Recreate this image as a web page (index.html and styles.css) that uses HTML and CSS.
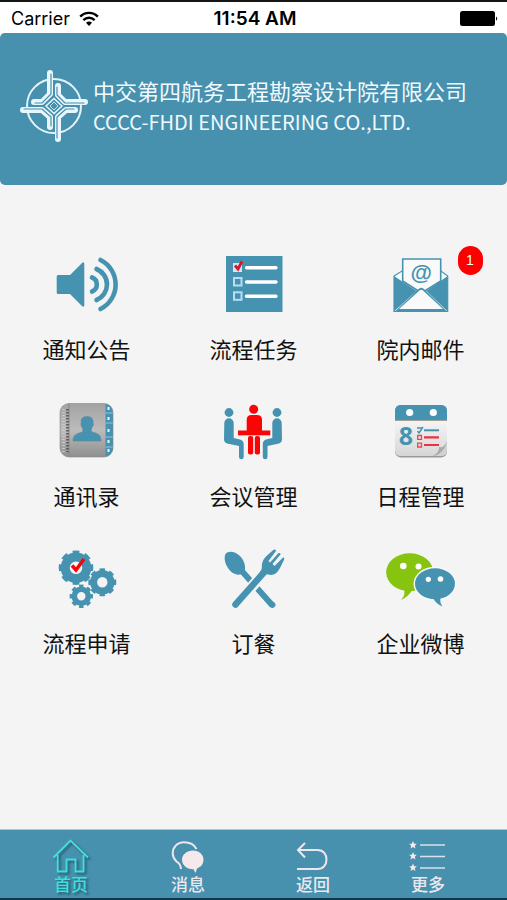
FILE: index.html
```html
<!DOCTYPE html>
<html lang="zh-CN">
<head>
  <meta charset="UTF-8">
  <meta name="viewport" content="width=device-width, initial-scale=1">
  <title>中交第四航务工程勘察设计院有限公司</title>
  <link rel="stylesheet" href="styles.css">
</head>
<body>

  <div class="status-bar">
    <div class="carrier">
      <span>Carrier</span>
      <svg class="wifi" viewBox="0 0 20 16" width="20" height="16">
        <g fill="none" stroke="#000" stroke-width="2.4">
          <path d="M1.2 5.6C6 .6 14 .6 18.8 5.6"/>
          <path d="M4.4 9.2C7.6 6 12.4 6 15.6 9.2"/>
        </g>
        <path d="M7 11.8C8.8 10.2 11.2 10.2 13 11.8L10 15Z"/>
      </svg>
    </div>
    <div class="clock">11:54 AM</div>
    <div class="battery">
      <svg viewBox="0 0 40 16" width="40" height="16">
        <rect x="1" y="0" width="35" height="15" rx="2.5"/>
        <path d="M37 5.5Q39.5 7.5 37 9.8Z"/>
      </svg>
    </div>
  </div>

  <header class="banner">
    <svg class="logo" viewBox="0 0 68 74" width="68" height="74">
      <circle cx="34" cy="37" r="27" fill="none" stroke="#e4f3fa" stroke-width="2"/>
      <g fill="none" stroke-linejoin="round" stroke-linecap="round">
        <g stroke="#e9f7fd" stroke-width="6">
          <path d="M30 4V25L22 33H14"/>
          <path d="M38 17V26L45 33H65"/>
          <path d="M3 41H22L30 48V58"/>
          <path d="M38 70V48L46 41H55"/>
        </g>
        <g stroke="#4791ae" stroke-width="1.200">
          <path d="M31 5V25L22 34H15"/>
          <path d="M37 18V26L45 34H64"/>
          <path d="M4 40H22L31 48V57"/>
          <path d="M37 69V48L46 40H54"/>
        </g>
      </g>
      <path d="M34 29.500L42 37L34 44.500L26 37Z" fill="#4791ae" stroke="#e9f7fd" stroke-width="1.500"/>
      <path d="M34 33L38 37L34 41L30 37Z" fill="none" stroke="#c5e3ef" stroke-width="1"/>
    </svg>
    <div class="company">
      <h1>中交第四航务工程勘察设计院有限公司</h1>
      <p>CCCC-FHDI ENGINEERING CO.,LTD.</p>
    </div>
  </header>

  <main class="menu">
    <a class="tile" href="#notice">
      <svg class="icon" viewBox="0 0 72 72">
        <path d="M7 27H19L31 15Q33.300 13 33.300 16V57Q33.300 60 31 58L19 46H7Q5.700 46 5.700 44.500V28.500Q5.700 27 7 27Z" fill="#4693b1"/>
        <g fill="none" stroke="#4693b1" stroke-width="4.600" stroke-linecap="round">
          <path d="M41 29.500A7.500 7.500 0 0 1 41 43.500"/>
          <path d="M45.500 21A16.700 16.700 0 0 1 45.500 52"/>
          <path d="M49.500 12A27.400 27.400 0 0 1 49.500 61"/>
        </g>
      </svg>
      <span class="label">通知公告</span>
    </a>

    <a class="tile" href="#tasks">
      <svg class="icon" viewBox="0 0 72 72">
        <rect x="8" y="8" width="56.500" height="56" fill="#4693b1"/>
        <rect x="15" y="15" width="9" height="9" fill="#d5e5f3"/>
        <g fill="none" stroke="#b9dcf0" stroke-width="2">
          <rect x="16" y="30" width="7.500" height="7.500"/>
          <rect x="16" y="44.300" width="7.500" height="7.500"/>
        </g>
        <path d="M28.500 19.700H58M28.500 34H58M28.500 48.300H58" stroke="#fff" stroke-width="3.400" stroke-linecap="round"/>
        <path d="M17 17.500L20 21L24 13.500" fill="none" stroke="#d3182b" stroke-width="2.800"/>
      </svg>
      <span class="label">流程任务</span>
    </a>

    <a class="tile" href="#mail">
      <svg class="icon" viewBox="0 0 72 72">
        <path d="M9 28L17 23H56L62.700 28V63.500H9Z" fill="#f8fafb" stroke="#4693b1" stroke-width="1.200"/>
        <path d="M17.700 33V11H55.700V33L36.500 45Z" fill="#fafafa" stroke="#4693b1" stroke-width="1.600"/>
        <path d="M9 28L31.500 43L9 63.500ZM62.700 28L41.500 43L62.700 63.500Z" fill="#4693b1"/>
        <path d="M10 63.500L33 41.500Q36.300 38 39.500 41.500L62 63.500Z" fill="#4693b1"/>
        <path d="M14 61L34.500 42.500Q36.300 41 38 42.500L58 61Z" fill="#fafafa"/>
        <text class="at-sign" x="36.300" y="32" text-anchor="middle">@</text>
      </svg>
      <span class="badge">1</span>
      <span class="label">院内邮件</span>
    </a>

    <a class="tile" href="#contacts">
      <svg class="icon" viewBox="0 0 72 72">
        <defs>
          <linearGradient id="cover" x1="0" y1="0" x2="0" y2="1">
            <stop offset="0" stop-color="#a2a2a2"/>
            <stop offset=".5" stop-color="#bcbcbc"/>
            <stop offset="1" stop-color="#8f8f8f"/>
          </linearGradient>
          <clipPath id="book"><rect x="9" y="8.500" width="53" height="53.500" rx="9"/></clipPath>
        </defs>
        <g clip-path="url(#book)">
          <rect x="9" y="8" width="53" height="54" fill="url(#cover)"/>
          <rect x="54.500" y="8" width="8" height="54" fill="#4693b1"/>
          <path d="M54.500 18H62M54.500 28H62M54.500 42H62M54.500 52H62" stroke="#8dc5dc"/>
          <path d="M57.500 12V15M57.500 22V25M57.500 34V37M57.500 45V48M57.500 54V57" stroke="#e5f5fb" stroke-width="2"/>
          <path d="M18 8V62" stroke="#888"/>
          <path d="M16.500 14V57" stroke="#555" stroke-width="2.500" stroke-dasharray="1.500 1.500"/>
          <path d="M12.500 14V57" stroke="#ccc" stroke-width="2.500" stroke-dasharray="1 2"/>
        </g>
        <rect x="9" y="8.500" width="53" height="53.500" rx="9" fill="none" stroke="#858585" stroke-opacity=".6"/>
        <path d="M36 21.500C41 21.500 42.500 24.500 42 28C43 29 42 31.500 41 32C40.500 35 39.500 35 41 37C46 38.500 50 39 50 46H22C22 39 27 38.500 31.500 37C32.500 35 31.500 34 31 32C30 31 29.500 29 30.300 28C29.500 24.500 31 21.500 36 21.500Z" fill="#4693b1" stroke="#638491" stroke-width=".6"/>
      </svg>
      <span class="label">通讯录</span>
    </a>

    <a class="tile" href="#meeting">
      <svg class="icon" viewBox="0 0 72 72">
        <g fill="#4693b1">
          <circle cx="11" cy="17.500" r="4.400"/>
          <path d="M6.300 28A4.700 4.700 0 0 1 15.700 28V43L22 44.500Q25.700 45.500 25.700 49V62A2.300 2.300 0 0 1 21 62V51L9 48.500Q6 47.500 6 44Z"/>
          <circle cx="59" cy="17.500" r="4.400"/>
          <path d="M63.700 28A4.700 4.700 0 0 0 54.300 28V43L48 44.500Q44.800 45.500 44.800 49V62A2.300 2.300 0 0 0 49.500 62V51L61 48.500Q64 47.500 64 44Z"/>
        </g>
        <g fill="#f90505">
          <circle cx="35.700" cy="14.300" r="4.500"/>
          <path d="M28.700 25Q28.700 20 33.500 20H39Q44 20 44 25V36H28.700Z"/>
          <rect x="20" y="35.500" width="32.300" height="4.800"/>
          <rect x="30" y="41" width="5.200" height="18.500" rx="2"/>
          <rect x="36.800" y="41" width="5.200" height="18.500" rx="2"/>
        </g>
      </svg>
      <span class="label">会议管理</span>
    </a>

    <a class="tile" href="#calendar">
      <svg class="icon" viewBox="0 0 72 72">
        <defs>
          <linearGradient id="page" x1="0" y1="0" x2="0" y2="1">
            <stop offset="0" stop-color="#f6f6f6"/>
            <stop offset="1" stop-color="#d6d6d6"/>
          </linearGradient>
        </defs>
        <rect x="10" y="10" width="52" height="52.500" rx="6" fill="#999"/>
        <path d="M10 24H62V47C58 54 54 59 48 61H16Q10 61 10 55Z" fill="url(#page)"/>
        <path d="M10 25V16Q10 10 16 10H56Q62 10 62 16V25Z" fill="#4693b1"/>
        <path d="M10 25.300H62" stroke="#8c8c86"/>
        <path d="M48 61C53 59 58 54 62 47V55Q62 61 56 61Z" fill="#d2d2d2"/>
        <path d="M48 61C52 58 54 57 54 52C58 53 60 51 62 47C60 54 55 60 48 61Z" fill="#a9a9a9"/>
        <circle cx="24.700" cy="17.500" r="3.600" fill="#fff"/>
        <circle cx="48.300" cy="17.500" r="3.600" fill="#fff"/>
        <text class="day" x="21" y="50" text-anchor="middle">8</text>
        <path d="M39 35.300H54" stroke="#4693b1" stroke-width="2"/>
        <path d="M32 33H37M32.500 36L34 38L38 32" fill="none" stroke="#4693b1" stroke-width="1.400"/>
        <path d="M39 42.300H54M39 50H54" stroke="#ee3040" stroke-width="2.200"/>
        <path d="M32.700 40.500H36.500V44.300H32.700ZM32.700 48.200H36.500V52H32.700Z" fill="none" stroke="#ee4450" stroke-width="1.300"/>
      </svg>
      <span class="label">日程管理</span>
    </a>

    <a class="tile" href="#apply">
      <svg class="icon" viewBox="0 0 72 72">
        <!-- each gear is a ring plus a dashed ring for the teeth -->
        <g fill="none" stroke="#4693b1">
          <circle cx="25" cy="25.700" r="10.800" stroke-width="9"/>
          <circle cx="25" cy="25.700" r="15.300" stroke-width="4" pathLength="16" stroke-dasharray="1.100 .9" stroke-dashoffset=".55"/>
          <circle cx="51.300" cy="40.300" r="8.700" stroke-width="7"/>
          <circle cx="51.300" cy="40.300" r="12.300" stroke-width="3.400" pathLength="16" stroke-dasharray="1.100 .9" stroke-dashoffset=".55"/>
          <circle cx="30.300" cy="54.300" r="7" stroke-width="5.600"/>
          <circle cx="30.300" cy="54.300" r="10.200" stroke-width="3" pathLength="16" stroke-dasharray="1.100 .9" stroke-dashoffset=".55"/>
        </g>
        <path d="M21 23.500L25 28L33 17" fill="none" stroke="#f90505" stroke-width="3.400"/>
      </svg>
      <span class="label">流程申请</span>
    </a>

    <a class="tile" href="#meal">
      <svg class="icon" viewBox="0 0 72 72">
        <path d="M22 27L54.500 63.500" stroke="#4693b1" stroke-width="6"/>
        <path d="M54 62.500L54.400 62.900" stroke="#4693b1" stroke-width="6" stroke-linecap="round"/>
        <path d="M7 13C9 8 17 9 22 14C27 19 29 28 25 31C20 35 13 31 10 26C7 22 6 17 7 13Z" fill="#4693b1"/>
        <path d="M23 57L46 31" stroke="#f4f4f4" stroke-width="11"/>
        <path d="M17.500 62.500L48 28" stroke="#4693b1" stroke-width="6.500" stroke-linecap="round"/>
        <path d="M56 7.500Q58 7 58 9L50.500 19L52 20.500L60.500 11Q63 10.500 62.500 12.500L54.500 22L56.500 24L65 15.500Q67 15 66 18C63 23 61 31 55.500 32.500C51 34 49 31 45 33L42 30C45 27 43 24 44.500 20C46 15 52 11 56 7.500Z" fill="#4693b1"/>
      </svg>
      <span class="label">订餐</span>
    </a>

    <a class="tile" href="#weibo">
      <svg class="icon" viewBox="0 0 72 72">
        <ellipse cx="24.700" cy="30.300" rx="23.500" ry="19" fill="#86c410"/>
        <path d="M19 46Q21 53 16 58Q23 55 28 47Z" fill="#86c410"/>
        <ellipse cx="50" cy="41.700" rx="21.500" ry="17" fill="#f9f9f9"/>
        <ellipse cx="50" cy="41.700" rx="20" ry="15.500" fill="#4693b1"/>
        <path d="M48 56Q51 62 57.500 64.500Q54 60 56 54Z" fill="#4693b1"/>
        <g fill="#fff">
          <circle cx="18.300" cy="24" r="3.300"/>
          <circle cx="33.500" cy="24.500" r="3"/>
          <circle cx="43.300" cy="37.300" r="2.600"/>
          <circle cx="55.500" cy="37" r="2.800"/>
        </g>
      </svg>
      <span class="label">企业微博</span>
    </a>
  </main>

  <nav class="tab-bar">
    <a class="tab active" href="#home">
      <svg viewBox="0 0 40 36" width="40" height="36">
        <path d="M6.700 17V33.500H15.500V21.500H24.500V33.500H32.500V17M2.500 19.500L19.500 2.500L37 19.500" fill="none" stroke="#3fe0d8" stroke-width="1.800"/>
      </svg>
      <span>首页</span>
    </a>
    <a class="tab" href="#messages">
      <svg viewBox="0 0 40 36" width="40" height="36">
        <path d="M28.500 11C26 6 21 4.200 16 4.200C9 4.200 4.700 9.500 4.700 15.500C4.700 19 6.500 21.500 8.500 23.500C12 26 12.500 27 13 31" fill="none" stroke="#eee6ec" stroke-width="2"/>
        <path d="M25 12.500C31 12.500 35.500 16.500 35.500 21.500C35.500 26 33 29 29 30.500L27.500 35L25.500 31.300C18 31.300 14 26.500 14 21.500C14 16.500 19 12.500 25 12.500Z" fill="#f5e9ed"/>
      </svg>
      <span>消息</span>
    </a>
    <a class="tab" href="#back">
      <svg viewBox="0 0 40 36" width="40" height="36">
        <path d="M12 5L5 12L12 19.500M5 12H24.500C30.500 12 33.500 16.500 33.500 21.500C33.500 26.500 30.500 31 24.500 31H4" fill="none" stroke="#eee6ec" stroke-width="2"/>
      </svg>
      <span>返回</span>
    </a>
    <a class="tab" href="#more">
      <svg viewBox="0 0 40 36" width="40" height="36">
        <defs>
          <path id="star" d="M0 -4L1.200 -1.300L3.800 -1.200L1.800 .7L2.500 3.500L0 2L-2.500 3.500L-1.800 .7L-3.800 -1.200L-1.200 -1.300Z" fill="#f5e9ed"/>
        </defs>
        <use href="#star" x="5" y="7"/>
        <use href="#star" x="5" y="18"/>
        <use href="#star" x="5" y="29.500"/>
        <path d="M12 7H37M12 18.500H37M12 30H37" stroke="#d9e1ea" stroke-width="1.600"/>
      </svg>
      <span>更多</span>
    </a>
  </nav>

</body>
</html>
```
FILE: styles.css
```css
* {
  box-sizing: border-box;
}
body {
  display: flex;
  flex-direction: column;
  min-height: 100vh;
  margin: 0;
  font-family: "Noto Sans CJK SC", "Noto Sans", sans-serif;
  color: #111;
  background: #f4f4f4;
}
a {
  color: inherit;
  text-decoration: none;
}
h1, p {
  margin: 0;
  font-weight: 400;
}
svg {
  display: block;
}

/* status bar */
.status-bar {
  display: grid;
  grid-template-columns: 1fr auto 1fr;
  align-items: center;
  height: 33px;
  padding: 2px 8px 0 11px;
  border-top: 2px solid #151515;
  background: #fff;
  color: #000;
  font-family: Inter, "Liberation Sans", sans-serif;
  font-size: 18px;
}
.carrier {
  display: flex;
  align-items: center;
  gap: 9px;
}
.clock {
  font-size: 19px;
  font-weight: 600;
}
.battery {
  justify-self: end;
}

/* company banner */
.banner {
  display: flex;
  align-items: center;
  gap: 5px;
  height: 152px;
  padding: 0 20px 6px;
  border-radius: 5px;
  background: #4791ae;
  color: #f0fafe;
}
.logo {
  flex: none;
}
.company {
  white-space: nowrap;
}
.company h1 {
  font-size: 22px;
  line-height: 32px;
}
.company p {
  font-size: 20px;
  line-height: 32px;
}

/* menu tiles */
.menu {
  flex: 1;
  display: grid;
  grid-template-columns: repeat(3, 1fr);
  align-content: start;
  row-gap: 33px;
  padding: 63px 3px;
}
.tile {
  position: relative;
  display: flex;
  flex-direction: column;
  align-items: center;
  gap: 14px;
}
.icon {
  width: 72px;
  height: 72px;
}
.label {
  font-size: 22px;
  line-height: 28px;
}
.at-sign {
  font: 700 22px "Liberation Sans", sans-serif;
  fill: #4693b1;
}
.day {
  font: 700 25px "Open Sans", sans-serif;
  fill: #4693b1;
}
.badge {
  position: absolute;
  top: -2px;
  left: calc(50% + 37px);
  width: 25px;
  height: 29px;
  border-radius: 13px;
  background: #f00;
  color: #fff;
  font: 14px/29px "Liberation Sans", sans-serif;
  text-align: center;
}

/* bottom tabs */
.tab-bar {
  display: grid;
  grid-template-columns: 118fr 116fr 134fr 96fr;
  height: 71px;
  padding: 8px 31px 0 12px;
  border-top: 1px solid #a9cbd7;
  border-bottom: 2px solid #12364a;
  background: #4791ae;
  color: #ece7ee;
}
.tab {
  display: flex;
  flex-direction: column;
  align-items: center;
  font-size: 17px;
  font-weight: 500;
  line-height: 20px;
}
.tab.active {
  color: #3fe0d8;
  filter: drop-shadow(2px 2px 1px rgba(0, 40, 60, 0.5));
}
```
